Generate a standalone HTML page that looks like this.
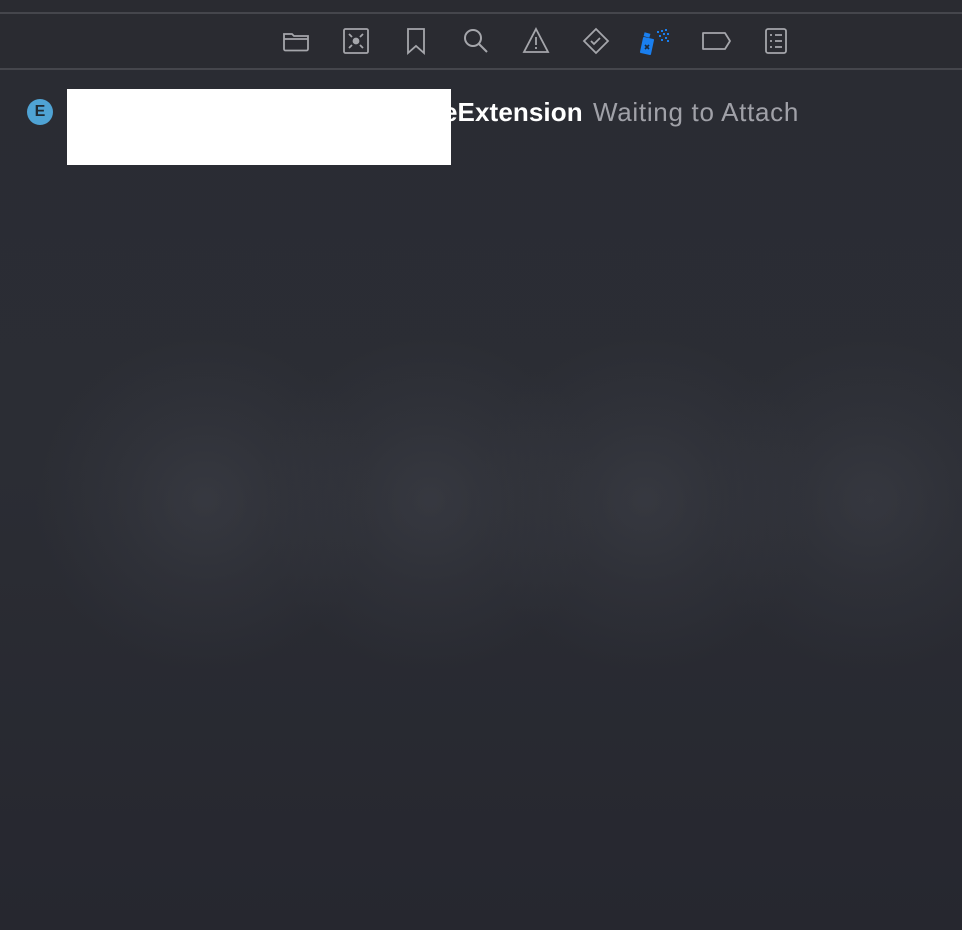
<!DOCTYPE html>
<html><head><meta charset="utf-8"><style>
html,body{margin:0;padding:0}
body{width:962px;height:930px;overflow:hidden;position:relative;font-family:"Liberation Sans",sans-serif;
background:
radial-gradient(circle 170px at 205px 500px,rgba(62,64,72,.6),rgba(62,64,72,.25) 50%,rgba(62,64,72,0) 100%),
radial-gradient(circle 170px at 430px 500px,rgba(62,64,72,.6),rgba(62,64,72,.25) 50%,rgba(62,64,72,0) 100%),
radial-gradient(circle 170px at 645px 500px,rgba(62,64,72,.6),rgba(62,64,72,.25) 50%,rgba(62,64,72,0) 100%),
radial-gradient(circle 170px at 870px 500px,rgba(62,64,72,.55),rgba(62,64,72,.22) 50%,rgba(62,64,72,0) 100%),
linear-gradient(#2a2c33,#2b2d34 50%,#26272f);}
.top{position:absolute;left:0;top:0;width:962px;height:12px;background:#2a2b31}
.l1{position:absolute;left:0;top:12px;width:962px;height:2px;background:#45464c}
.l2{position:absolute;left:0;top:68px;width:962px;height:2px;background:#45464c}
.bar{position:absolute;left:0;top:14px;width:962px;height:54px;background:#2a2b31}
svg.ic{position:absolute;top:27px}
.badge{position:absolute;left:27px;top:99px;width:26px;height:26px;border-radius:50%;background:#4fa3d4;color:#1f2a33;font-weight:bold;font-size:16px;line-height:26px;text-align:center}
.box{position:absolute;left:67px;top:89px;width:384px;height:76px;background:#fff}
.t1{position:absolute;left:443px;top:96px;font-size:26px;font-weight:bold;color:#fff;white-space:nowrap;line-height:32px;letter-spacing:0.1px}
.t2{position:absolute;left:593px;top:96px;font-size:26px;color:#a0a1a8;white-space:nowrap;line-height:32px;letter-spacing:0.7px}
</style></head><body>
<div class="top"></div><div class="l1"></div><div class="bar"></div><div class="l2"></div>
<svg class="ic" style="left:282px" width="28" height="28" viewBox="0 0 28 28" fill="none" stroke="#a5a6ab" stroke-width="1.8"><path d="M2 7h8l2 2h14v13a1.5 1.5 0 0 1-1.5 1.5h-21A1.5 1.5 0 0 1 2 22z M2 12h24"/></svg>
<svg class="ic" style="left:342px" width="28" height="28" viewBox="0 0 28 28" fill="none" stroke="#a5a6ab" stroke-width="1.8"><rect x="2" y="2" width="24" height="24" rx="1.5"/><circle cx="14" cy="14" r="2.5" fill="#a5a6ab"/><path d="M7 7l3 3M21 7l-3 3M7 21l3-3M21 21l-3-3"/></svg>
<svg class="ic" style="left:402px" width="28" height="28" viewBox="0 0 28 28" fill="none" stroke="#a5a6ab" stroke-width="1.8"><path d="M6 2h16v24l-8-7-8 7z"/></svg>
<svg class="ic" style="left:462px" width="28" height="28" viewBox="0 0 28 28" fill="none" stroke="#a5a6ab" stroke-width="2"><circle cx="11" cy="11" r="8"/><path d="M17 17l8 8"/></svg>
<svg class="ic" style="left:522px" width="28" height="28" viewBox="0 0 28 28" fill="none" stroke="#a5a6ab" stroke-width="1.8"><path d="M14 2L26 25H2z"/><path d="M14 10v8M14 20v2"/></svg>
<svg class="ic" style="left:582px" width="28" height="28" viewBox="0 0 28 28" fill="none" stroke="#a5a6ab" stroke-width="1.8"><path d="M14 2l12 12-12 12L2 14z"/><path d="M9 14l3 3 6-6"/></svg>
<svg class="ic" style="left:640px" width="32" height="28" viewBox="0 0 32 28"><rect x="4" y="6" width="6" height="4" fill="#1a7fef" transform="rotate(15 7 8)"/><path d="M4 11l9 2 -3 14-9-2z" fill="#1a7fef" stroke="#1a7fef" stroke-width="2" stroke-linejoin="round"/><path d="M5 18l4 4M9 18l-4 4" stroke="#1d2a3a" stroke-width="1.6"/><g fill="#1a7fef"><rect x="17" y="4" width="2" height="2"/><rect x="21" y="3" width="2" height="2"/><rect x="25" y="2" width="2" height="2"/><rect x="23" y="6" width="2" height="2"/><rect x="27" y="6" width="2" height="2"/><rect x="19" y="8" width="2" height="2"/><rect x="25" y="10" width="2" height="2"/><rect x="21" y="12" width="2" height="2"/><rect x="27" y="13" width="2" height="2"/></g></svg>
<svg class="ic" style="left:700px" width="32" height="28" viewBox="0 0 32 28" fill="none" stroke="#a5a6ab" stroke-width="1.8"><path d="M3 6h22l5 8-5 8H3z" stroke-linejoin="round"/></svg>
<svg class="ic" style="left:762px" width="28" height="28" viewBox="0 0 28 28" fill="none" stroke="#a5a6ab" stroke-width="1.8"><rect x="4" y="2" width="20" height="24" rx="2"/><path d="M8 8h2M13 8h7M8 14h2M13 14h7M8 20h2M13 20h7"/></svg>
<div class="badge">E</div>
<div class="box"></div>
<div class="t1">eExtension</div>
<div class="t2">Waiting to Attach</div>
</body></html>
